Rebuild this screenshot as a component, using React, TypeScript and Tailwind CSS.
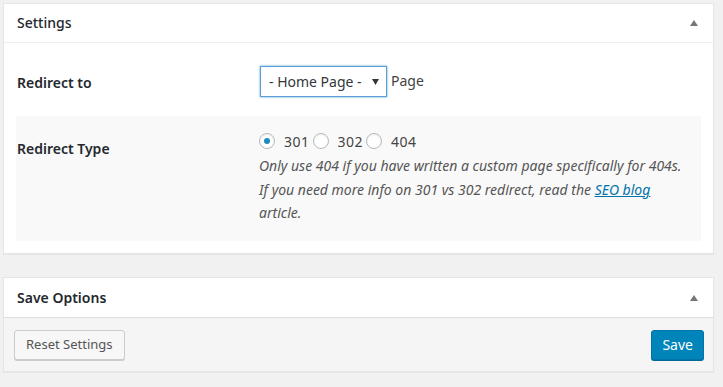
import React from "react";

function Caret() {
  return (
    <svg width="10" height="8" viewBox="0 0 10 8" className="block">
      <path d="M1 7 L5 1 L9 7 Z" fill="#72777c" />
    </svg>
  );
}

function Radio({ checked, label }: { checked?: boolean; label: string }) {
  return (
    <span className="flex items-center">
      <span className="w-[16px] h-[16px] rounded-full border border-[#b4b9be] bg-white shadow-[inset_0_1px_2px_rgba(0,0,0,0.07)] flex items-center justify-center shrink-0">
        {checked && <span className="w-[6px] h-[6px] rounded-full bg-[#1e8cbe]" />}
      </span>
      <span className="ml-[9px] mr-[3px] text-[14px] text-[#444] tracking-[0.5px]">{label}</span>
    </span>
  );
}

export default function App() {
  return (
    <div
      className="w-[723px] h-[387px] bg-[#f1f1f1] pt-[3px] pl-[3px] overflow-hidden"
      style={{ fontFamily: '"Noto Sans", "Open Sans", sans-serif' }}
    >
      <div className="w-[711px] h-[251px] bg-white border border-[#e5e5e5] shadow-[0_1px_1px_rgba(0,0,0,0.04)] flex flex-col">
        <div className="h-[39px] border-b border-[#eee] flex items-center justify-between pl-[13px] pr-[14px]">
          <span className="text-[14px] text-[#23282d] leading-none font-medium">Settings</span>
          <Caret />
        </div>
        <div className="px-[12px]">
          <div className="h-[73px] flex items-center pt-[4px]">
            <div className="w-[244px] pl-[1px] text-[14px] font-semibold text-[#23282d] pt-[2px]">Redirect to</div>
            <div className="flex items-center">
              <div className="w-[127px] h-[31px] border border-[#5b9dd9] shadow-[0_0_2px_rgba(30,140,190,0.8)] bg-white flex items-center justify-between pl-[8px] pr-[7px]">
                <span className="text-[14px] text-[#32373c]">- Home Page -</span>
                <svg width="7" height="6" viewBox="0 0 7 6"><path d="M0 0 L7 0 L3.5 6 Z" fill="#32373c" /></svg>
              </div>
              <span className="ml-[4px] text-[14px] text-[#444] -mt-[2px]">Page</span>
            </div>
          </div>
          <div className="h-[125px] bg-[#f9f9f9] flex">
            <div className="w-[243px] pl-[1px] pt-[22px] text-[14px] font-semibold text-[#23282d]">Redirect Type</div>
            <div className="pt-[16px]">
              <div className="flex items-center h-[18px]">
                <Radio checked label="301" />
                <Radio label="302" />
                <Radio label="404" />
              </div>
              <div className="mt-[4px] text-[14px] italic text-[#555] leading-[23.5px] whitespace-nowrap">
                <div>Only use 404 if you have written a custom page specifically for 404s.</div>
                <div>
                  If you need more info on 301 vs 302 redirect, read the{" "}
                  <a href="#" className="text-[#0073aa] underline">SEO blog</a>
                </div>
                <div>article.</div>
              </div>
            </div>
          </div>
        </div>
      </div>

      <div className="mt-[23px] w-[711px] h-[95px] bg-white border border-[#e5e5e5] shadow-[0_1px_1px_rgba(0,0,0,0.04)] flex flex-col">
        <div className="h-[39px] flex items-center justify-between pl-[13px] pr-[14px]">
          <span className="text-[14px] text-[#23282d] font-semibold leading-none">Save Options</span>
          <Caret />
        </div>
        <div className="flex-1 bg-[#f5f5f5] border-t border-[#ddd] flex items-center justify-between pl-[10px] pr-[9px]">
          <button className="h-[30px] px-[11px] bg-[#f7f7f7] border border-[#ccc] rounded-[3px] shadow-[0_1px_0_#ccc] text-[13px] text-[#555]">
            Reset Settings
          </button>
          <button className="h-[30px] px-[10px] bg-[#0085ba] border border-[#0073aa] rounded-[3px] shadow-[0_1px_0_#006799] text-[14px] text-white">
            Save
          </button>
        </div>
      </div>
    </div>
  );
}
